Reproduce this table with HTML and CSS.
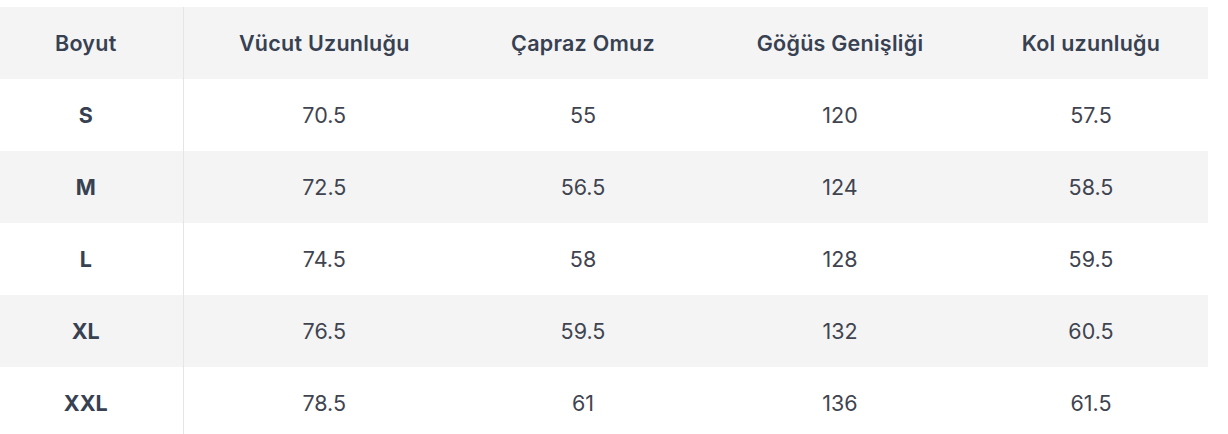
FILE: index.html
```html
<!DOCTYPE html>
<html lang="tr">
<head>
<meta charset="utf-8">
<link rel="stylesheet" href="styles.css">
</head>
<body>
<table class="size-table">
  <colgroup>
    <col class="c1"><col class="c2"><col class="c3"><col class="c4"><col class="c5">
  </colgroup>
  <thead>
    <tr><th>Boyut</th><th>Vücut Uzunluğu</th><th>Çapraz Omuz</th><th>Göğüs Genişliği</th><th>Kol uzunluğu</th></tr>
  </thead>
  <tbody>
    <tr><td>S</td><td>70.5</td><td>55</td><td>120</td><td>57.5</td></tr>
    <tr><td>M</td><td>72.5</td><td>56.5</td><td>124</td><td>58.5</td></tr>
    <tr><td>L</td><td>74.5</td><td>58</td><td>128</td><td>59.5</td></tr>
    <tr><td>XL</td><td>76.5</td><td>59.5</td><td>132</td><td>60.5</td></tr>
    <tr><td>XXL</td><td>78.5</td><td>61</td><td>136</td><td>61.5</td></tr>
  </tbody>
</table>
</body>
</html>
```
FILE: styles.css
```css
html, body {
  margin: 0;
  padding: 0;
  background: #ffffff;
}
body {
  font-family: Inter, "Noto Sans", sans-serif;
  padding-top: 7px;
}
.size-table {
  width: 1208px;
  border-collapse: collapse;
  table-layout: fixed;
}
.c1 { width: 183px; }
.c2 { width: 282px; }
.c3 { width: 236px; }
.c4 { width: 278px; }
.c5 { width: 229px; }
.size-table th,
.size-table td {
  height: 72px;
  padding: 0;
  text-align: center;
  vertical-align: middle;
  font-size: 21.5px;
  box-sizing: border-box;
}
.size-table th {
  background: #f4f4f4;
  color: #374151;
  font-weight: 600;
  letter-spacing: 0.25px;
}
.size-table td {
  color: #3f4450;
  font-weight: 400;
}
.size-table tbody tr:nth-child(even) td {
  background: #f4f4f4;
}
.size-table th:first-child,
.size-table td:first-child {
  padding-right: 11px;
  border-right: 1px solid #e5e5e5;
}
.size-table td:first-child {
  font-weight: 700;
  color: #374151;
}
.size-table th:last-child,
.size-table td:last-child {
  padding-right: 5px;
}
```
